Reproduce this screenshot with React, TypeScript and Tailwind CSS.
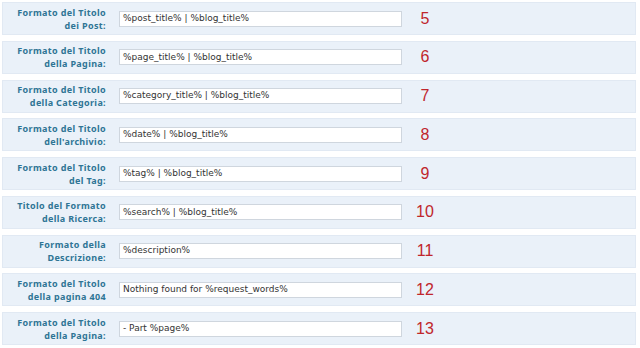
import React from 'react';

const ROWS = [
  { label: ['Formato del Titolo', 'dei Post:'], value: '%post_title% | %blog_title%', n: 5 },
  { label: ['Formato del Titolo', 'della Pagina:'], value: '%page_title% | %blog_title%', n: 6 },
  { label: ['Formato del Titolo', 'della Categoria:'], value: '%category_title% | %blog_title%', n: 7 },
  { label: ['Formato del Titolo', "dell'archivio:"], value: '%date% | %blog_title%', n: 8 },
  { label: ['Formato del Titolo', 'del Tag:'], value: '%tag% | %blog_title%', n: 9 },
  { label: ['Titolo del Formato', 'della Ricerca:'], value: '%search% | %blog_title%', n: 10 },
  { label: ['Formato della', 'Descrizione:'], value: '%description%', n: 11 },
  { label: ['Formato del Titolo', 'della pagina 404'], value: 'Nothing found for %request_words%', n: 12 },
  { label: ['Formato del Titolo', 'della Pagina:'], value: '- Part %page%', n: 13 },
];

const App: React.FC = () => {
  return (
    <div className="w-[640px] h-[348px] bg-white pt-[2px] pl-[2px] overflow-hidden">
      <div className="w-[634px] flex flex-col gap-[5.75px]">
        {ROWS.map((row, i) => (
          <div
            key={i}
            className="h-[33px] flex items-center bg-[#eaf1f9] border border-[#e1e9f3]"
          >
            <div className="w-[103px] text-right text-[9px] tracking-[0.35px] leading-[13px] font-bold text-[#2f7595] font-['Noto_Sans',sans-serif]">
              <div>{row.label[0]}</div>
              <div>{row.label[1]}</div>
            </div>
            <div className="ml-[13px] w-[283px] h-[16px] bg-white border border-[#cfd6de] flex items-center pl-[3px] text-[9px] text-[#333] font-['DejaVu_Sans',sans-serif] whitespace-pre">
              {row.value}
            </div>
            <div className="w-[46px] text-center text-[16px] leading-none text-[#c0262c] font-['Liberation_Sans',Arial,sans-serif]">
              {row.n}
            </div>
          </div>
        ))}
      </div>
    </div>
  );
};

export default App;
